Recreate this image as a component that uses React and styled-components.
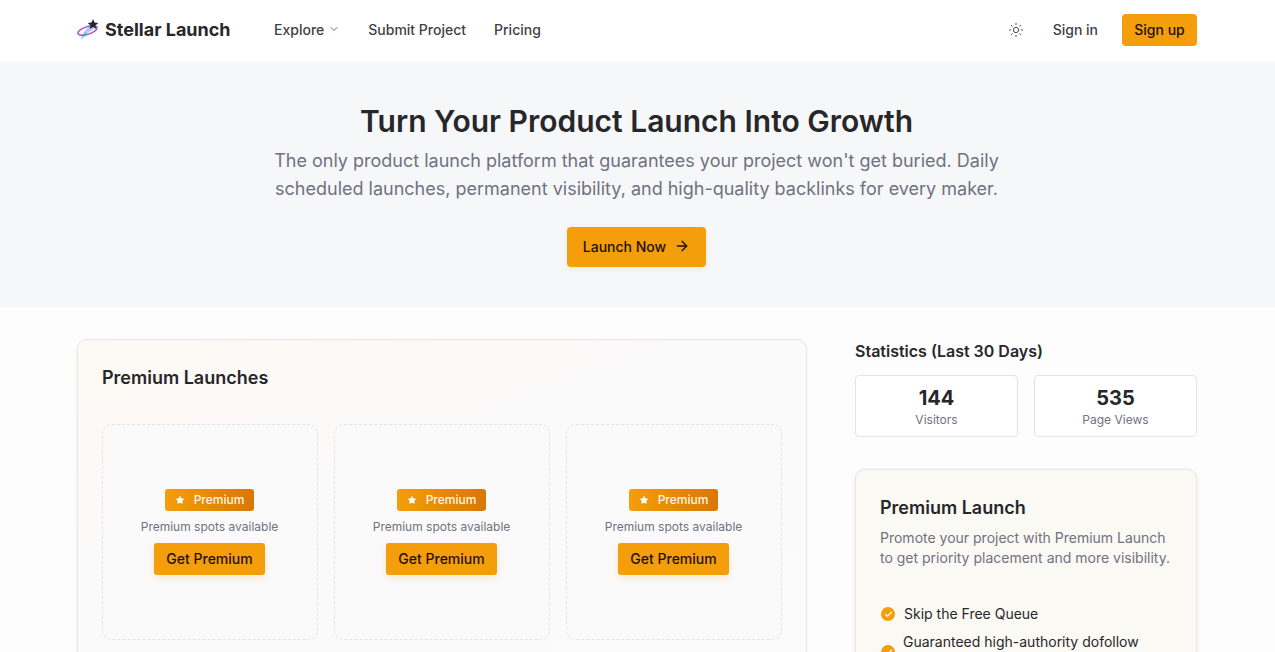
import React from 'react'
import styled, { createGlobalStyle } from 'styled-components'
import { ArrowRight, ChevronDown, Sun, Star, Check } from 'lucide-react'

const GlobalStyle = createGlobalStyle`
  html, body {
    margin: 0;
    height: 100%;
    overflow: hidden;
  }
  body {
    font-family: Inter, "Liberation Sans", sans-serif;
    color: #27272a;
    background: #fdfdfd;
  }
  * {
    box-sizing: border-box;
  }
`

function Logo() {
  return (
    <svg width="24" height="24" viewBox="0 0 24 24" fill="none">
      <path d="M3.5 22 L7.5 13 L11 15 Z" fill="#4fe3cf" />
      <path d="M7.5 13 L13 7 L18 10 L11 15 Z" fill="#b9c4fb" />
      <ellipse cx="10.5" cy="12.5" rx="10" ry="3.8" transform="rotate(-18 10.5 12.5)" stroke="#a855c7" strokeWidth="1.5" />
      <path d="M16 1 L17.5 4.5 L21.3 4.9 L18.4 7.4 L19.3 11 L16 9.1 L12.7 11 L13.6 7.4 L10.7 4.9 L14.5 4.5 Z" fill="#27272a" />
    </svg>
  )
}

function PremiumSlot() {
  return (
    <Slot>
      <Badge>
        <Star size={10} fill="#fff" strokeWidth={0} />
        Premium
      </Badge>
      <SlotText>Premium spots available</SlotText>
      <GetButton>Get Premium</GetButton>
    </Slot>
  )
}

function Feature({ children, tight }) {
  return (
    <FeatureRow>
      <CheckDot><Check size={9} color="#fff" strokeWidth={3.5} /></CheckDot>
      <FeatureText $tight={tight}>{children}</FeatureText>
    </FeatureRow>
  )
}

export default function App() {
  return (
    <Page>
      <GlobalStyle />
      <Nav>
        <NavInner>
          <Brand>
            <Logo />
            <BrandName>Stellar Launch</BrandName>
          </Brand>
          <NavLinks>
            <NavLink>
              Explore
              <ChevronDown size={12} color="#71717a" />
            </NavLink>
            <NavLink>Submit Project</NavLink>
            <NavLink>Pricing</NavLink>
          </NavLinks>
          <NavRight>
            <Sun size={16} color="#52525b" strokeWidth={1.5} />
            <SignIn>Sign in</SignIn>
            <SignUp>Sign up</SignUp>
          </NavRight>
        </NavInner>
      </Nav>

      <Hero>
        <HeroTitle>Turn Your Product Launch Into Growth</HeroTitle>
        <HeroText>
          The only product launch platform that guarantees your project won't get buried. Daily
          scheduled launches, permanent visibility, and high-quality backlinks for every maker.
        </HeroText>
        <LaunchButton>
          Launch Now
          <ArrowRight size={16} strokeWidth={2} />
        </LaunchButton>
      </Hero>

      <Main>
        <LeftCard>
          <CardTitle>Premium Launches</CardTitle>
          <SlotGrid>
            <PremiumSlot />
            <PremiumSlot />
            <PremiumSlot />
          </SlotGrid>
        </LeftCard>

        <Side>
          <SideHeading>Statistics (Last 30 Days)</SideHeading>
          <StatGrid>
            <StatCard>
              <StatNumber>144</StatNumber>
              <StatLabel>Visitors</StatLabel>
            </StatCard>
            <StatCard>
              <StatNumber>535</StatNumber>
              <StatLabel>Page Views</StatLabel>
            </StatCard>
          </StatGrid>
          <PromoCard>
            <PromoTitle>Premium Launch</PromoTitle>
            <PromoText>
              Promote your project with Premium Launch to get priority placement and more visibility.
            </PromoText>
            <FeatureList>
              <Feature>Skip the Free Queue</Feature>
              <Feature tight>Guaranteed high-authority dofollow backlink</Feature>
            </FeatureList>
          </PromoCard>
        </Side>
      </Main>
    </Page>
  )
}

const Page = styled.div`
  height: 652px;
  overflow: hidden;
`
const Nav = styled.header`
  height: 62px;
  padding-bottom: 2px;
  background: #fff;
`
const NavInner = styled.div`
  width: 1120px;
  height: 100%;
  margin-left: 77px;
  display: flex;
  align-items: center;
`
const Brand = styled.div`
  display: flex;
  align-items: center;
  gap: 4px;
  width: 197px;
  font-size: 18px;
  font-weight: 700;
  color: #27272a;
`
const BrandName = styled.span`
  padding-bottom: 2px;
`
const NavLinks = styled.nav`
  display: flex;
  align-items: center;
  gap: 28px;
`
const NavLink = styled.a`
  display: flex;
  align-items: center;
  gap: 4px;
  padding-bottom: 2px;
  font-size: 14px;
  font-weight: 500;
  color: #3f3f46;
`
const NavRight = styled.div`
  margin-left: auto;
  display: flex;
  align-items: center;
`
const SignIn = styled.a`
  margin-left: 29px;
  padding-bottom: 2px;
  font-size: 14px;
  font-weight: 500;
  color: #3f3f46;
`
const SignUp = styled.button`
  margin-left: 24px;
  width: 75px;
  height: 32px;
  padding: 0 0 2px;
  border: none;
  border-radius: 4px;
  background: #f59e0b;
  font: 500 14px Inter, sans-serif;
  color: #1c1205;
`
const Hero = styled.section`
  height: 245px;
  padding: 41px 2px 0 0;
  background: #f6f7f9;
  display: flex;
  flex-direction: column;
  align-items: center;
`
const HeroTitle = styled.h1`
  margin: 0;
  font-size: 30px;
  line-height: 36px;
  font-weight: 600;
  color: #27272a;
`
const HeroText = styled.p`
  margin: 8px 0 0;
  width: 740px;
  font-size: 18px;
  line-height: 28px;
  text-align: center;
  color: #71717f;
`
const LaunchButton = styled.button`
  margin-top: 24px;
  width: 139px;
  height: 40px;
  padding: 0 0 2px;
  display: flex;
  align-items: center;
  justify-content: center;
  gap: 8px;
  border: none;
  border-radius: 4px;
  background: #f59e0b;
  box-shadow: 0 2px 6px rgba(0, 0, 0, 0.06);
  font: 500 14px Inter, sans-serif;
  color: #1c1205;
`
const Main = styled.main`
  width: 1120px;
  margin-left: 77px;
  padding-top: 32px;
  display: grid;
  grid-template-columns: 730px 342px;
  gap: 48px;
  align-items: start;
`
const LeftCard = styled.section`
  height: 400px;
  padding: 24px;
  border: 1px solid #e7e7ea;
  border-radius: 10px;
  background: linear-gradient(160deg, #fdf9f4 0%, #fbfafa 35%, #fbfbfc 100%);
  box-shadow: 0 1px 3px rgba(0, 0, 0, 0.05);
`
const CardTitle = styled.h2`
  margin: 0;
  font-size: 18px;
  line-height: 28px;
  font-weight: 600;
  color: #27272a;
`
const SlotGrid = styled.div`
  margin-top: 32px;
  display: grid;
  grid-template-columns: repeat(3, 216px);
  gap: 16px;
`
const Slot = styled.div`
  height: 216px;
  padding-right: 1px;
  display: flex;
  flex-direction: column;
  align-items: center;
  justify-content: center;
  border: 1px dashed #e4e4e7;
  border-radius: 10px;
  background: #fafafb;
`
const Badge = styled.span`
  width: 89px;
  height: 22px;
  padding-bottom: 1px;
  display: flex;
  align-items: center;
  justify-content: center;
  gap: 9px;
  border-radius: 3px;
  background: linear-gradient(90deg, #f59e0b, #d97706);
  font-size: 12px;
  font-weight: 500;
  color: #fff5e0;
`
const SlotText = styled.p`
  margin: 8px 0 0;
  font-size: 12px;
  line-height: 16px;
  color: #71717f;
`
const GetButton = styled.button`
  margin-top: 8px;
  width: 111px;
  height: 32px;
  padding: 0 0 2px;
  border: none;
  border-radius: 3px;
  background: #f59e0b;
  box-shadow: 0 3px 8px rgba(245, 158, 11, 0.2);
  font: 500 14px Inter, sans-serif;
  color: #1c1205;
`
const Side = styled.aside`
  display: flex;
  flex-direction: column;
`
const SideHeading = styled.h3`
  margin: 0;
  height: 24px;
  font-size: 16px;
  line-height: 24px;
  font-weight: 600;
  color: #27272a;
`
const StatGrid = styled.div`
  margin-top: 12px;
  display: grid;
  grid-template-columns: repeat(2, 163px);
  gap: 16px;
`
const StatCard = styled.div`
  height: 62px;
  padding-top: 8px;
  text-align: center;
  border: 1px solid #e4e4e7;
  border-radius: 4px;
  background: #fff;
`
const StatNumber = styled.div`
  font-size: 20px;
  line-height: 28px;
  font-weight: 700;
  color: #27272a;
`
const StatLabel = styled.div`
  font-size: 12px;
  line-height: 16px;
  color: #71717f;
`
const PromoCard = styled.section`
  margin-top: 32px;
  height: 300px;
  padding: 24px;
  border: 1px solid #e7e7ea;
  border-radius: 10px;
  background: #fbf9f4;
  box-shadow: 0 1px 4px rgba(0, 0, 0, 0.08);
`
const PromoTitle = styled.h3`
  margin: 0;
  font-size: 18px;
  line-height: 28px;
  font-weight: 600;
  color: #27272a;
`
const PromoText = styled.p`
  margin: 6px 0 0;
  font-size: 14px;
  line-height: 20px;
  color: #71717f;
`
const FeatureList = styled.ul`
  margin: 36px 0 0;
  padding: 0 0 0 1px;
  list-style: none;
  display: flex;
  flex-direction: column;
  gap: 8px;
`
const FeatureRow = styled.li`
  display: flex;
  align-items: center;
  gap: 9px;
`
const CheckDot = styled.span`
  flex: none;
  width: 14px;
  height: 14px;
  display: flex;
  align-items: center;
  justify-content: center;
  border-radius: 50%;
  background: #f59e0b;
`
const FeatureText = styled.span`
  margin-left: ${({ $tight }) => ($tight ? '-1px' : '0')};
  font-size: 14px;
  line-height: 20px;
  color: #27272a;
`
